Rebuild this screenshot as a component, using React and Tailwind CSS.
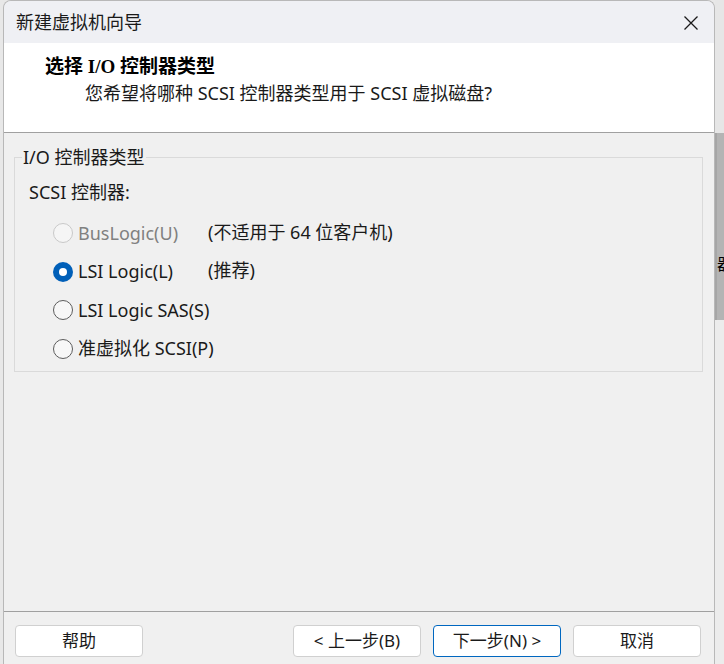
const SANS = { fontFamily: '"Noto Sans", "Noto Sans CJK SC", sans-serif' };

const OPTIONS = [
  { label: "BusLogic(U)", note: "(不适用于 64 位客户机)", disabled: true },
  { label: "LSI Logic(L)", note: "(推荐)", checked: true },
  { label: "LSI Logic SAS(S)" },
  { label: "准虚拟化 SCSI(P)" },
];

function Radio({ checked, disabled }) {
  if (checked) {
    return (
      <span className="w-[20px] h-[20px] rounded-full bg-[#005fb8] flex items-center justify-center shrink-0">
        <span className="w-[8px] h-[8px] rounded-full bg-white" />
      </span>
    );
  }
  return (
    <span
      className={
        disabled
          ? "w-[20px] h-[20px] rounded-full border border-[#c9c9c9] bg-[#f5f5f5] shrink-0"
          : "w-[20px] h-[20px] rounded-full border border-[#5c5c5c] bg-[#f7f7f7] shrink-0"
      }
    />
  );
}

function Button({ children, primary }) {
  return (
    <button
      className={
        primary
          ? "w-[128px] h-[32px] rounded-[4px] bg-white border border-[#0067c0] text-[17px] text-[#1a1a1a]"
          : "w-[128px] h-[32px] rounded-[4px] bg-white border border-[#d0d0d0] text-[17px] text-[#1a1a1a]"
      }
      style={SANS}
    >
      {children}
    </button>
  );
}

export default function App() {
  return (
    <div className="w-[724px] h-[664px] flex bg-[#e8e8e8] overflow-hidden" style={SANS}>
      <div className="ml-[3px] w-[712px] shrink-0 h-full flex flex-col rounded-t-[8px] border-l border-r border-t border-[#b8b8b8] overflow-hidden">
        {/* title bar */}
        <div className="h-[42px] bg-[#eff0f4] flex items-center justify-between pl-[12px] pr-[15px] shrink-0">
          <span className="text-[18px] text-[#1a1a1a]">新建虚拟机向导</span>
          <svg width="16" height="16" viewBox="0 0 16 16" className="mt-[1px]">
            <path d="M1.5 1.5 L14.5 14.5 M14.5 1.5 L1.5 14.5" stroke="#1a1a1a" strokeWidth="1.3" fill="none" />
          </svg>
        </div>

        {/* header */}
        <div className="h-[90px] bg-white border-b border-[#a0a0a0] shrink-0 pt-[11px] pl-[41px]">
          <div
            className="text-[19px] font-bold leading-[26px] text-black"
            style={{ fontFamily: '"Liberation Serif", "Noto Sans CJK SC", serif' }}
          >
            选择 I/O 控制器类型
          </div>
          <div className="pl-[40px] text-[18px] leading-[26px] text-[#1a1a1a]">
            您希望将哪种 SCSI 控制器类型用于 SCSI 虚拟磁盘?
          </div>
        </div>

        {/* body */}
        <div className="flex-1 bg-[#f0f0f0] flex flex-col">
          <fieldset className="mt-[13px] ml-[10px] mr-[11px] border border-[#dadada] pb-[3px]">
            <legend className="ml-[7px] px-[1px] text-[18px] leading-[22px] text-[#1a1a1a]">I/O 控制器类型</legend>
            <div className="pl-[14px] mt-[11px] text-[18px] leading-[26px] text-[#1a1a1a]">SCSI 控制器:</div>
            <div className="mt-[9px] flex flex-col">
              {OPTIONS.map((o, i) => (
                <div key={i} className="h-[38.5px] flex items-center pl-[38px] whitespace-nowrap">
                  <Radio checked={o.checked} disabled={o.disabled} />
                  <span
                    className={
                      o.disabled
                        ? "ml-[5px] w-[130px] text-[18px] text-[#808080]"
                        : "ml-[5px] w-[130px] text-[18px] text-[#1a1a1a]"
                    }
                  >
                    {o.label}
                  </span>
                  {o.note && <span className="-mt-[2px] text-[18px] text-[#1a1a1a]">{o.note}</span>}
                </div>
              ))}
            </div>
          </fieldset>
          <div className="flex-1" />
          <div className="h-[1px] bg-[#a0a0a0]" />
          <div className="h-[52px] flex items-start pt-[13px] pl-[11px] pr-[13px]">
            <Button>帮助</Button>
            <div className="flex-1" />
            <div className="flex gap-[12px]">
              <Button>&lt; 上一步(B)</Button>
              <Button primary>下一步(N) &gt;</Button>
              <Button>取消</Button>
            </div>
          </div>
        </div>
      </div>

      {/* background window strip */}
      <div className="flex-1 min-w-0 overflow-hidden flex flex-col">
        <div className="h-[133px] bg-[#e6e6e6]" />
        <div className="h-[187px] bg-[#b4b4b4] border-l-2 border-[#a6a6a6] flex flex-col">
          <div className="mt-[121px] h-[20px] w-[8px] overflow-hidden text-[16px] leading-[20px] text-black whitespace-nowrap">器</div>
        </div>
        <div className="flex-1 bg-[#ececec]" />
      </div>
    </div>
  );
}
